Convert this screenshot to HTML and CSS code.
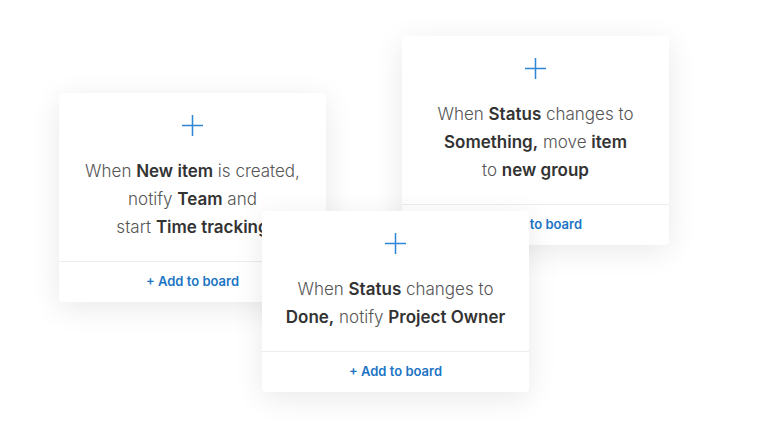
FILE: index.html
```html
<!DOCTYPE html>
<html lang="en">
<head>
    <meta charset="UTF-8">
    <meta name="viewport" content="width=device-width, initial-scale=1.0">
    <title>Automations</title>
    <link rel="stylesheet" href="styles.css">
</head>
<body>
    <div class="canvas">
        <div class="recipe recipe-left">
            <div class="recipe-body">
                <svg class="plus" viewBox="0 0 22 22"><path d="M11 0V22M0 11H22"/></svg>
                <p class="recipe-text">When <b>New item</b> is created,<br>notify <b>Team</b> and<br>start <b>Time tracking</b></p>
            </div>
            <div class="recipe-foot">+ Add to board</div>
        </div>
        <div class="recipe recipe-right">
            <div class="recipe-body">
                <svg class="plus" viewBox="0 0 22 22"><path d="M11 0V22M0 11H22"/></svg>
                <p class="recipe-text">When <b>Status</b> changes to<br><b>Something,</b> move <b>item</b><br>to <b>new group</b></p>
            </div>
            <div class="recipe-foot">+ Add to board</div>
        </div>
        <div class="recipe recipe-front">
            <div class="recipe-body">
                <svg class="plus" viewBox="0 0 22 22"><path d="M11 0V22M0 11H22"/></svg>
                <p class="recipe-text">When <b>Status</b> changes to<br><b>Done,</b> notify <b>Project Owner</b></p>
            </div>
            <div class="recipe-foot">+ Add to board</div>
        </div>
    </div>
</body>
</html>
```

FILE: styles.css
```css
body, html {
    margin: 0;
    padding: 0;
    background: #fff;
    font-family: Inter, 'DejaVu Sans', Arial, sans-serif;
}
.canvas {
    position: relative;
    width: 768px;
    height: 434px;
    overflow: hidden;
}
/* cards lie over each other on the canvas */
.recipe {
    position: absolute;
    width: 267px;
    background: #fff;
    border-radius: 4px;
    box-shadow: 0 6px 30px rgba(0,0,0,0.09);
    display: flex;
    flex-direction: column;
}
.recipe-left {
    left: 59px;
    top: 93px;
}
.recipe-right {
    left: 402px;
    top: 36px;
}
.recipe-front {
    left: 262px;
    top: 211px;
}
.recipe-body {
    display: flex;
    flex-direction: column;
    align-items: center;
    padding: 22px 10px 20px 10px;
    border-bottom: 1px solid #ececec;
}
.plus {
    width: 21px;
    height: 21px;
    stroke: #2f86d6;
    stroke-width: 1.6;
    fill: none;
}
.recipe-text {
    margin: 21px 0 0 0;
    text-align: center;
    font-size: 17px;
    line-height: 28px;
    color: #555;
    font-weight: 300;
    white-space: nowrap;
}
.recipe-text b {
    color: #333;
    font-weight: 600;
}
.recipe-foot {
    box-sizing: border-box;
    height: 40px;
    padding-bottom: 3px;
    display: flex;
    align-items: center;
    justify-content: center;
    color: #1c75c4;
    font-size: 13px;
    font-weight: 600;
}
```
